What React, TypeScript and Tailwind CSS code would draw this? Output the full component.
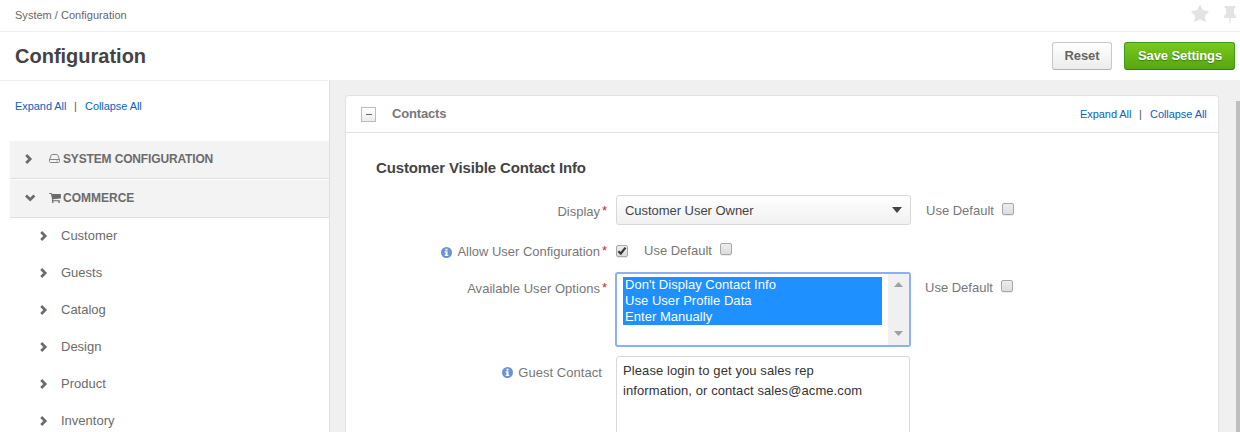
import React from 'react';

function ChevronRight() {
  return (
    <svg className="shrink-0" width="8" height="10" viewBox="0 0 8 10" fill="none" stroke="#6b6b6b" strokeWidth="2.7">
      <path d="M1.2 1 5.2 5 1.2 9" />
    </svg>
  );
}

function ChevronDown() {
  return (
    <svg className="shrink-0" width="11" height="8" viewBox="0 0 11 8" fill="none" stroke="#6b6b6b" strokeWidth="2.7">
      <path d="M1 1.6 5.2 5.6 9.4 1.6" />
    </svg>
  );
}

function DriveIcon() {
  return (
    <svg className="shrink-0" width="11" height="10" viewBox="0 0 11 10" fill="none" stroke="#858585" strokeWidth="1">
      <path d="M.5 5.5 2.2 1.2Q2.4.5 3.1.5h4.8q.7 0 .9.7l1.7 4.3v2q0 1-1 1h-8q-1 0-1-1zM.5 5.5h10" />
      <path d="M7.500 7h1" />
    </svg>
  );
}

function CartIcon() {
  return (
    <svg className="shrink-0" width="12" height="10" viewBox="0 0 1664 1408" fill="#6b6b6b">
      <path d="M640 1280a128 128 0 1 1-256 0 128 128 0 0 1 256 0zM1536 1280a128 128 0 1 1-256 0 128 128 0 0 1 256 0zM1664 192v512q0 24-16.500 42.500t-40.500 21.500l-1044 122q13 60 13 70 0 16-24 64h920q26 0 45 19t19 45-19 45-45 19H448q-26 0-45-19t-19-45q0-11 8-31.500t16-36 21.500-40 15.500-29.500L268 128H64q-26 0-45-19T0 64t19-45T64 0h256q16 0 28.500 6.500t19.500 15.500 13 24.500 8 26 5.500 29.500 4.500 26h1201q26 0 45 19t19 45z" />
    </svg>
  );
}

function StarIcon() {
  return (
    <svg width="18" height="17" viewBox="0 0 1664 1587" fill="#e3e3e3">
      <path d="M1664 615q0 22-26 48l-363 354 86 500q1 7 1 20 0 21-10.500 35.500T1321 1587q-19 0-40-12l-449-236-449 236q-22 12-40 12-21 0-31.500-14.500T301 1537q0-6 2-20l86-500L25 663Q0 636 0 615q0-37 56-46l502-73L783 41q19-41 49-41t49 41l225 455 502 73q56 9 56 46z" />
    </svg>
  );
}

function PinIcon() {
  return (
    <svg className="mt-px" width="12" height="18" viewBox="0 0 12 18" fill="#e3e3e3">
      <path d="M1.500 0h9q.9 0 .9.800v.700q0 .8-.9.800h-.600v5.200Q12 8.800 12 11.500q0 .5-.5.500H6.800L6.300 17.500q-.1.500-.3.500t-.3-.5L5.200 12H.5q-.5 0-.5-.5Q0 8.800 2.100 7.500V2.300h-.6q-.9 0-.9-.8V.8q0-.8.900-.8z" />
    </svg>
  );
}

function InfoIcon() {
  return (
    <svg className="shrink-0" width="11" height="11" viewBox="0 0 11 11">
      <circle cx="5.500" cy="5.500" r="5.500" fill="#6a93d4" />
      <path d="M4.500 1.800h2v1.600h-2zM3.700 4.300h2.800v3.500h.8v1.200H3.700V7.800h.8V5.500h-.8z" fill="#fff" />
    </svg>
  );
}

function Checkbox({ checked = false }: { checked?: boolean }) {
  return (
    <span className="flex h-[12px] w-[12px] shrink-0 items-center justify-center rounded-[2px] border border-[#a8a8a8] bg-linear-to-b from-[#ededed] to-[#dcdcdc] shadow-[0_1px_0_#ececec]">
      {checked && (
        <svg width="10" height="10" viewBox="0 0 10 10" fill="none" stroke="#3a3a3a" strokeWidth="2.200">
          <path d="M1.400 5.200 3.800 7.500 8.500 1.600" />
        </svg>
      )}
    </span>
  );
}

function ExpandLinks() {
  return (
    <div className="flex text-[11px] leading-[14px] tracking-[-0.060px] text-[#0b62bd]">
      <span className="w-[59px]">Expand All</span>
      <span className="w-[11px] text-[#555]">|</span>
      <span className="w-[57px] whitespace-nowrap">Collapse All</span>
    </div>
  );
}

function Required() {
  return <span className="-mt-px ml-[2px] w-[5px] text-[13px] text-[#c9213e]">*</span>;
}

function UseDefault() {
  return (
    <div className="flex">
      <span className="w-[76px] text-[13px] leading-[16px] text-[#777]">Use Default</span>
      <Checkbox />
    </div>
  );
}

type GroupRowProps = { open?: boolean; icon: React.ReactNode; children: React.ReactNode };

function GroupRow({ open, icon, children }: GroupRowProps) {
  return (
    <div className="mb-px flex h-[38px] items-center border-b border-[#dfdfdf] bg-[#f3f3f3] pb-px pl-[15px]">
      <span className="flex w-[24px]">{open ? <ChevronDown /> : <ChevronRight />}</span>
      <span className="flex w-[14px]">{icon}</span>
      <span className="text-[12px] font-bold leading-[16px] text-[#6b6b6b]">{children}</span>
    </div>
  );
}

const items = ['Customer', 'Guests', 'Catalog', 'Design', 'Product', 'Inventory'];

export default function App() {
  return (
    <div className="flex h-[432px] w-[1240px] flex-col overflow-hidden bg-white font-['Liberation_Sans',Arial,sans-serif]">
      <div className="flex h-[32px] shrink-0 justify-between border-b border-[#f0f0f0] pl-[15px]">
        <span className="mt-[8px] text-[11px] leading-[14px] tracking-[0.020px] text-[#666]">System / Configuration</span>
        <div className="mr-[4px] mt-[5px] flex gap-[15px]">
          <StarIcon />
          <PinIcon />
        </div>
      </div>
      <div className="flex h-[48px] shrink-0 justify-between pl-[15px] pr-[5px]">
        <h1 className="mt-[12px] text-[20px] font-bold leading-[24px] text-[#444]">Configuration</h1>
        <div className="mt-[10px] flex gap-[12px]">
          <button className="h-[28px] w-[60px] rounded-[3px] border border-[#c8c8c8] border-b-[#b0b0b0] bg-linear-to-b from-white to-[#ececec] text-[13px] font-bold leading-[26px] tracking-[-0.100px] text-[#666]">Reset</button>
          <button className="h-[28px] w-[111px] rounded-[3px] border border-[#42991a] border-b-[#35800f] bg-linear-to-b from-[#7cc81f] to-[#55a70f] pl-px text-[13px] font-bold leading-[26px] tracking-[-0.080px] text-white [text-shadow:0_1px_1px_#3c7c0c]">Save Settings</button>
        </div>
      </div>

      <div className="flex min-h-0 flex-1">
        <aside className="w-[330px] shrink-0 overflow-hidden border-r border-t border-r-[#dfdfdf] border-t-[#f0f0f0] pl-[10px]">
          <div className="ml-[5px] mt-[18px] h-[42px]">
            <ExpandLinks />
          </div>
          <GroupRow icon={<DriveIcon />}><span className="tracking-[-0.150px]">SYSTEM CONFIGURATION</span></GroupRow>
          <GroupRow open icon={<CartIcon />}>COMMERCE</GroupRow>
          <div className="-mt-[2px]">
            {items.map((item) => (
              <div key={item} className="flex h-[37px] items-center pl-[30px]">
                <span className="w-[21px]"><ChevronRight /></span>
                <span className="text-[13px] leading-[16px] text-[#6b6b6b]">{item}</span>
              </div>
            ))}
          </div>
        </aside>

        <main className="flex min-w-0 flex-1 bg-[#f0f0f0] pl-[15px]">
          <section className="mt-[15px] w-[874px] shrink-0 overflow-hidden rounded-t-[4px] border border-b-0 border-[#e2e2e2] bg-white">
            <header className="flex h-[37px] border-b border-[#e2e2e2] pl-[15px] pr-[11px]">
              <span className="mt-[11px] flex h-[15px] w-[15px] items-center justify-center border border-[#bcbcbc] bg-linear-to-b from-white to-[#ececec]">
                <span className="-mt-px h-px w-[6px] bg-[#666]" />
              </span>
              <h2 className="ml-[16px] mt-[10px] flex-1 text-[13px] font-bold leading-[16px] tracking-[-0.180px] text-[#777]">Contacts</h2>
              <div className="mt-[11px]"><ExpandLinks /></div>
            </header>

            <div className="pl-[30px]">
              <h3 className="mt-[26px] h-[36px] text-[15px] font-bold leading-[18px] tracking-[-0.140px] text-[#444]">Customer Visible Contact Info</h3>

              <div className="flex h-[47px] text-[13px] leading-[16px] text-[#777]">
                <div className="mt-[9px] flex w-[240px] justify-end pr-[9px]">
                  <span>Display</span><Required />
                </div>
                <div className="flex h-[30px] w-[295px] items-center justify-between rounded-[3px] border border-[#d9d9d9] bg-linear-to-b from-white to-[#f1f1f1] pl-[8px] pr-[8px]">
                  <span className="mt-px tracking-[-0.040px] text-[#444]">Customer User Owner</span>
                  <svg width="10" height="6" viewBox="0 0 10 6"><path d="M0 0h10L5 6z" fill="#444" /></svg>
                </div>
                <div className="ml-[15px] mt-[8px]"><UseDefault /></div>
              </div>

              <div className="flex h-[30px] text-[13px] leading-[16px] text-[#777]">
                <div className="mt-[2px] flex w-[240px] justify-end pr-[9px]">
                  <span className="mr-[5px] mt-[3px]"><InfoIcon /></span>
                  <span className="tracking-[-0.020px]">Allow User Configuration</span><Required />
                </div>
                <div className="mt-[3px]"><Checkbox checked /></div>
                <div className="ml-[16px] mt-px"><UseDefault /></div>
              </div>

              <div className="flex h-[84px] text-[13px] leading-[16px] text-[#777]">
                <div className="mt-[9px] flex w-[239px] justify-end pr-[8px]">
                  <span className="tracking-[0.040px]">Available User Options</span><Required />
                </div>
                <div className="flex h-[75px] w-[296px] justify-between rounded-[3px] border-2 border-[#8ab1f5] bg-white">
                  <div className="ml-[6px] mt-[3px] h-[48px] w-[259px] bg-[#1e90ff] pl-[2px] tracking-[0.040px] text-white">
                    <div>Don't Display Contact Info</div>
                    <div>Use User Profile Data</div>
                    <div>Enter Manually</div>
                  </div>
                  <div className="flex w-[21px] flex-col items-center justify-between bg-[#f0f0f0] pb-[9px] pt-[8px]">
                    <svg width="9" height="5" viewBox="0 0 9 5"><path d="M0 5h9L4.500 0z" fill="#a0a0a0" /></svg>
                    <svg width="9" height="5" viewBox="0 0 9 5"><path d="M0 0h9L4.500 5z" fill="#a0a0a0" /></svg>
                  </div>
                </div>
                <div className="ml-[14px] mt-[8px]"><UseDefault /></div>
              </div>

              <div className="flex h-[100px] text-[13px] leading-[16px] text-[#777]">
                <div className="mt-[9px] flex w-[240px] justify-end pr-[14px]">
                  <span className="mr-[5px] mt-[2px]"><InfoIcon /></span>
                  <span className="tracking-[0.050px]">Guest Contact</span>
                </div>
                <div className="w-[294px] rounded-t-[3px] border border-[#d9d9d9] bg-white pl-[6px] pt-[4px] leading-[20px] tracking-[0.090px] text-[#333]">
                  <div>Please login to get you sales rep</div>
                  <div>information, or contact sales@acme.com</div>
                </div>
              </div>
            </div>
          </section>
          <div className="ml-auto mt-[21px] w-[4px] bg-[#bfbfbf]" />
        </main>
      </div>
    </div>
  );
}
